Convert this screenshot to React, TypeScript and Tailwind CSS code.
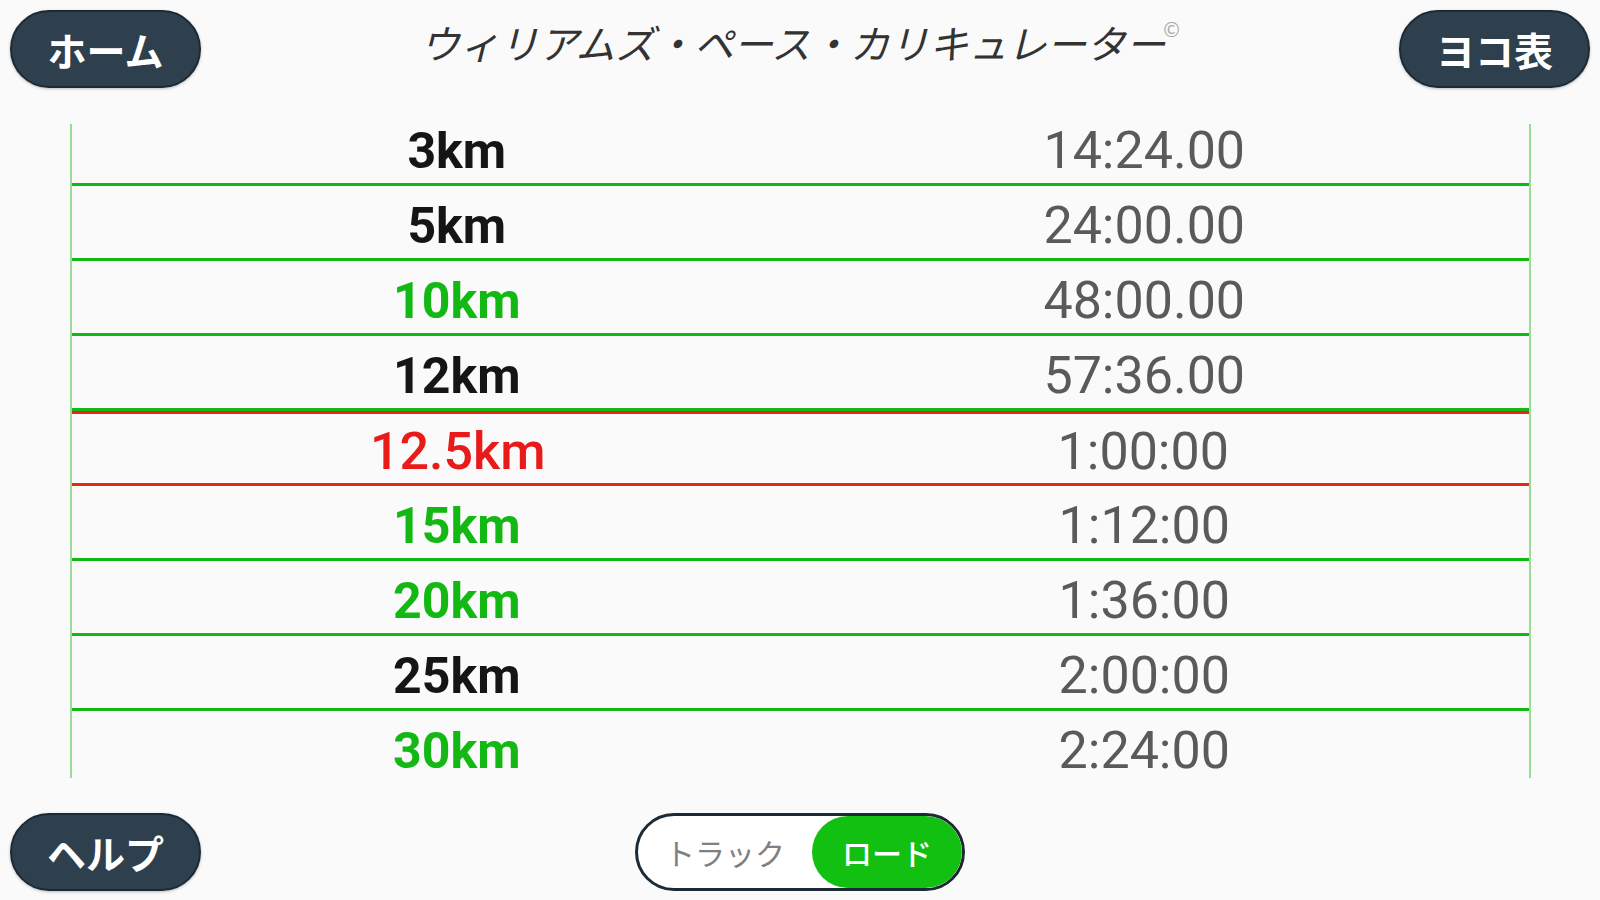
import React from "react";

type Row = { d: string; t: string; kind: "black" | "green" | "red" };

const rows: Row[] = [
  { d: "3km", t: "14:24.00", kind: "black" },
  { d: "5km", t: "24:00.00", kind: "black" },
  { d: "10km", t: "48:00.00", kind: "green" },
  { d: "12km", t: "57:36.00", kind: "black" },
  { d: "12.5km", t: "1:00:00", kind: "red" },
  { d: "15km", t: "1:12:00", kind: "green" },
  { d: "20km", t: "1:36:00", kind: "green" },
  { d: "25km", t: "2:00:00", kind: "black" },
  { d: "30km", t: "2:24:00", kind: "green" },
  { d: "35km", t: "2:48:00", kind: "black" },
];

const jp = { fontFamily: '"Noto Sans CJK JP", "Noto Sans", sans-serif' };
const ro = { fontFamily: 'Roboto, "Noto Sans", sans-serif' };

function PillButton({ label }: { label: string }) {
  return (
    <button
      className="w-[191px] h-[78px] rounded-full bg-[#2e404d] border-2 border-[#1c2a35] text-white text-[39px] font-bold flex items-center justify-center shadow-[0_1px_3px_rgba(0,0,0,0.25)]"
      style={jp}
    >
      {label}
    </button>
  );
}

export default function App() {
  return (
    <div className="w-[1600px] h-[900px] bg-[#fafafa] flex flex-col overflow-hidden">
      {/* Header */}
      <div className="h-[124px] px-[10px] pt-[10px] flex items-start justify-between">
        <PillButton label="ホーム" />
        <div
          className="pt-[12px] text-[39.5px] italic text-[#333] leading-none flex items-start"
          style={jp}
        >
          <span className="font-normal">ウィリアムズ・ペース・カリキュレーター</span>
          <span className="text-[20px] text-[#aaa] not-italic -ml-[2px] -mt-[3px]">©</span>
        </div>
        <PillButton label="ヨコ表" />
      </div>

      {/* Table */}
      <div className="pl-[70px] pr-[69px]">
        <div className="h-[654px] overflow-hidden border-x-2 border-[#97dd97]">
          <div className="-mt-[13px]">
            {rows.map((r) => {
              const isRed = r.kind === "red";
              const dColor =
                r.kind === "green"
                  ? "text-[#14b814] font-bold text-[50px]"
                  : isRed
                  ? "text-[#e81a1a] font-medium text-[52px]"
                  : "text-[#151515] font-bold text-[50px]";
              return (
                <div
                  key={r.d}
                  className={
                    isRed
                      ? "h-[75px] border-y-[3px] border-x-2 border-[#e8251a] -mx-[2px] pl-[43px] pr-[43px] pt-[6px] grid grid-cols-2 items-center"
                      : "h-[75px] border-b-[3px] border-[#14b814] px-[41px] pt-[8px] grid grid-cols-2 items-center"
                  }
                >
                  <div className={`text-center leading-none ${dColor}`} style={ro}>
                    {r.d}
                  </div>
                  <div className="text-center text-[52px] leading-none text-[#5a5a5a]" style={ro}>
                    {r.t}
                  </div>
                </div>
              );
            })}
          </div>
        </div>
      </div>

      {/* Footer */}
      <div className="relative px-[10px] pt-[35px] flex items-start">
        <PillButton label="ヘルプ" />
        <div className="absolute left-[635px] top-[35px] w-[330px] h-[78px] rounded-full border-[3px] border-[#1c2a35] bg-white flex items-stretch overflow-hidden">
          <div className="flex-1 flex items-center justify-center text-[30px] text-[#808080]" style={jp}>
            トラック
          </div>
          <div className="w-[150px] rounded-full bg-[#12c012] flex items-center justify-center text-[30px] font-medium text-white" style={jp}>
            ロード
          </div>
        </div>
      </div>
    </div>
  );
}
